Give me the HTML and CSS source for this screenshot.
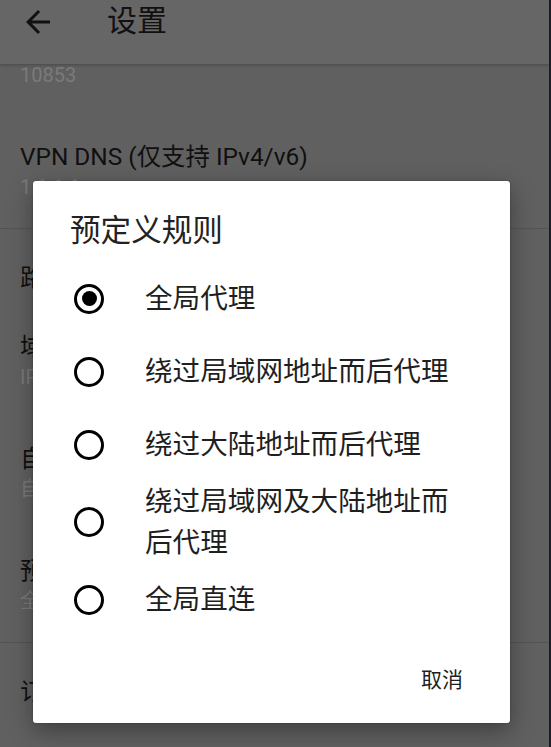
FILE: index.html
```html
<!DOCTYPE html>
<html lang="zh-CN">
<head>
<meta charset="utf-8">
<title>设置</title>
<link rel="stylesheet" href="styles.css">
</head>
<body>
<div class="screen">
  <header class="appbar">
    <svg class="back" viewBox="0 0 24 24" aria-hidden="true">
      <path d="M20 11H7.83l5.59-5.59L12 4l-8 8 8 8 1.41-1.41L7.83 13H20v-2z"/>
    </svg>
    <h1 class="appbar-title">设置</h1>
  </header>

  <main class="prefs">
    <div class="pref pref-first">
      <div class="pref-summary">10853</div>
    </div>
    <div class="pref">
      <div class="pref-title">VPN DNS (仅支持 IPv4/v6)</div>
      <div class="pref-summary">1.1.1.1</div>
    </div>
    <hr class="divider">
    <div class="category">路由设置</div>
    <div class="pref">
      <div class="pref-title">域名策略</div>
      <div class="pref-summary">IPIfNonMatch</div>
    </div>
    <div class="pref">
      <div class="pref-title">自定义规则</div>
      <div class="pref-summary">自定义</div>
    </div>
    <div class="pref">
      <div class="pref-title">预定义规则</div>
      <div class="pref-summary">全局代理</div>
    </div>
    <hr class="divider">
    <div class="category">订阅设置</div>
  </main>

  <div class="scrim">
    <div class="dialog" role="dialog">
      <h2 class="dialog-title">预定义规则</h2>
      <ul class="options">
        <li class="option"><span class="radio on"></span><span class="option-label">全局代理</span></li>
        <li class="option"><span class="radio"></span><span class="option-label">绕过局域网地址而后代理</span></li>
        <li class="option"><span class="radio"></span><span class="option-label">绕过大陆地址而后代理</span></li>
        <li class="option"><span class="radio"></span><span class="option-label">绕过局域网及大陆地址而后代理</span></li>
        <li class="option"><span class="radio"></span><span class="option-label">全局直连</span></li>
      </ul>
      <div class="actions">
        <button class="text-button" type="button">取消</button>
      </div>
    </div>
  </div>
</div>
</body>
</html>
```

FILE: styles.css
```css
html {
  background: #1c1b29;
}

body {
  margin: 0;
  font-family: Roboto, "Noto Sans CJK SC", sans-serif;
}

.screen {
  position: relative;
  margin-right: 2px;
  height: 747px;
  overflow: hidden;
  background: #606060;
  color: #101010;
}

/* top app bar */
.appbar {
  position: relative;
  z-index: 1;
  height: 64px;
  display: flex;
  align-items: flex-start;
  background: #666666;
  box-shadow: 0 1px 3px rgba(0, 0, 0, 0.25);
}

.back {
  width: 36px;
  height: 36px;
  margin: 4px 0 0 20px;
  fill: #111;
  flex: none;
}

.appbar-title {
  margin: 0 0 0 51px;
  font-size: 30px;
  line-height: 42px;
  font-weight: 400;
  color: #111;
}

/* preference list behind the dialog, scrolled part-way */
.prefs {
  display: flex;
  flex-direction: column;
}

.pref {
  padding: 25px 20px;
}

.pref-first {
  margin-top: -29px;
}

.pref-title {
  font-size: 24.4px;
  line-height: 31px;
  color: #101010;
  white-space: nowrap;
}

.pref-summary {
  font-size: 20px;
  line-height: 31px;
  color: #7a7a7a;
  white-space: nowrap;
}

.divider {
  margin: 0;
  border: 0;
  border-top: 1px solid #545454;
}

.category {
  padding: 34px 20px 13px;
  font-size: 24px;
  line-height: 30px;
  color: #101010;
}

/* dialog */
.scrim {
  position: absolute;
  inset: 0;
  z-index: 2;
  padding: 181px 0 0 33px;
}

.dialog {
  width: 477px;
  height: 542px;
  box-sizing: border-box;
  background: #fff;
  border-radius: 3px;
  box-shadow: 0 8px 24px rgba(0, 0, 0, 0.35), 0 0 2px rgba(0, 0, 0, 0.3);
  display: flex;
  flex-direction: column;
  color: #1f1f1f;
}

.dialog-title {
  margin: 29px 0 0 37px;
  font-size: 30.6px;
  line-height: 42px;
  font-weight: 400;
  color: #222;
}

.options {
  list-style: none;
  margin: 10px 0 0;
  padding: 0;
}

.option {
  display: flex;
  align-items: center;
  gap: 41px;
  min-height: 73px;
  padding: 0 45px 0 41px;
}

.radio {
  flex: none;
  width: 30px;
  height: 30px;
  box-sizing: border-box;
  border: 3.5px solid #000;
  border-radius: 50%;
  display: grid;
  place-items: center;
}

.radio.on::after {
  content: "";
  width: 15px;
  height: 15px;
  border-radius: 50%;
  background: #000;
}

.option-label {
  font-size: 27.6px;
  line-height: 41px;
  color: #1f1f1f;
}

.actions {
  flex: 1;
  display: flex;
  align-items: center;
  justify-content: flex-end;
  padding-right: 47px;
}

.text-button {
  border: 0;
  background: none;
  padding: 0;
  font: inherit;
  font-size: 21px;
  line-height: 30px;
  color: #1f1f1f;
}
```
